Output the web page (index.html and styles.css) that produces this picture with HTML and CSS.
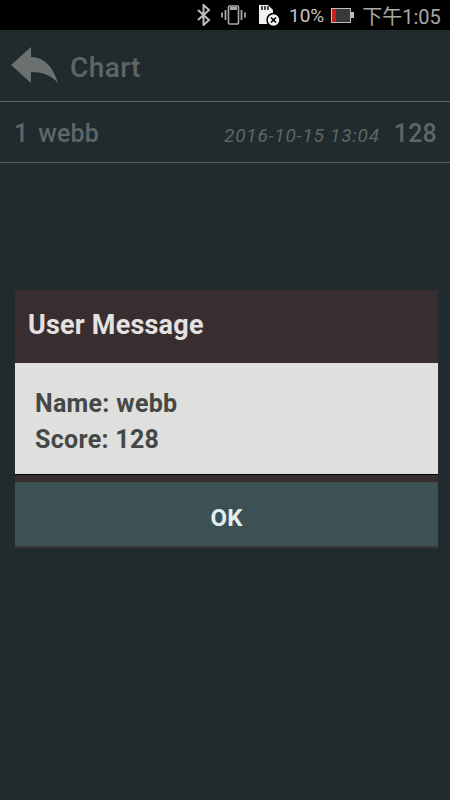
FILE: index.html
```html
<!DOCTYPE html>
<html lang="en">
<head>
    <meta charset="UTF-8">
    <meta name="viewport" content="width=device-width, initial-scale=1.0">
    <title>Chart</title>
    <link rel="stylesheet" href="styles.css">
</head>
<body>
    <div class="status-bar">
        <svg class="icon-bt" width="16" height="22" viewBox="0 0 16 22">
            <path d="M2 6 L13 16 L7.5 21 V1 L13 6 L2 16" fill="none" stroke="#bdbdbd" stroke-width="2"/>
        </svg>
        <svg class="icon-vibrate" width="25" height="20" viewBox="0 0 25 20">
            <rect x="7.5" y="1" width="10" height="18" rx="1" fill="none" stroke="#a8a8a8" stroke-width="1.6"/>
            <rect x="9" y="2" width="7" height="3" fill="#a8a8a8"/>
            <path d="M4.5 5 V15 M20.5 5 V15" stroke="#a8a8a8" stroke-width="1.8"/>
            <path d="M1 7.5 V12.5 M24 7.5 V12.5" stroke="#a8a8a8" stroke-width="1.8"/>
        </svg>
        <svg class="icon-sd" width="24" height="24" viewBox="0 0 24 24">
            <path d="M2 2 H11 L16 7 V21 H2 Z" fill="#f2f2f2"/>
            <path d="M5 3 V7 M8 3 V7 M11 3 V7" stroke="#000" stroke-width="1.4"/>
            <circle cx="16.5" cy="17" r="6.5" fill="#f2f2f2" stroke="#000" stroke-width="1.5"/>
            <path d="M14 14.5 L19 19.5 M19 14.5 L14 19.5" stroke="#000" stroke-width="1.6"/>
        </svg>
        <span class="battery-pct">10%</span>
        <div class="battery">
            <div class="battery-level"></div>
            <div class="battery-tip"></div>
        </div>
        <span class="clock">下午1:05</span>
    </div>

    <div class="header">
        <svg class="back-icon" width="48" height="38" viewBox="0 0 48 38">
            <path d="M0 18 L20 0 V10 C34 10 43 22 47 36 C40 28 31 25 20 25 V36 Z" fill="#6b7070"/>
        </svg>
        <span class="title">Chart</span>
    </div>

    <div class="row">
        <span class="rank">1</span>
        <span class="name">webb</span>
        <span class="date">2016-10-15 13:04</span>
        <span class="score">128</span>
    </div>

    <div class="dialog">
        <div class="dialog-title">User Message</div>
        <div class="dialog-body">
            <p>Name: webb</p>
            <p>Score: 128</p>
        </div>
        <div class="dialog-btn">OK</div>
    </div>
</body>
</html>
```

FILE: styles.css
```css
* {
    margin: 0;
    padding: 0;
    box-sizing: border-box;
    font-family: 'Roboto', 'Noto Sans CJK TC', sans-serif;
}

body {
    background-color: #212b2d;
    width: 450px;
    height: 800px;
    overflow: hidden;
    position: relative;
}

.status-bar {
    background-color: #000;
    height: 30px;
    display: flex;
    align-items: center;
    padding-left: 196px;
    color: #c4c4c4;
}

.icon-bt {
    margin-right: 9px;
}

.icon-vibrate {
    margin-right: 11px;
}

.icon-sd {
    margin-right: 8px;
}

.battery-pct {
    font-size: 19px;
    margin-right: 7px;
}

.battery {
    display: flex;
    align-items: center;
    margin-right: 8px;
}

.battery-level {
    width: 20px;
    height: 15px;
    background: linear-gradient(90deg, #c8201c 0 4px, #3a3a3a 4px);
    border: 1px solid #bdbdbd;
}

.battery-tip {
    width: 3px;
    height: 6px;
    background-color: #bdbdbd;
}

.clock {
    font-size: 20px;
    color: #a8a8a8;
}

.header {
    height: 72px;
    display: flex;
    align-items: center;
    padding-left: 11px;
    border-bottom: 1px solid #626868;
}

.back-icon {
    margin-right: 11px;
}

.title {
    font-size: 28px;
    font-weight: 500;
    letter-spacing: 0.4px;
    color: #5f6565;
    padding-top: 3px;
}

.row {
    height: 61px;
    display: flex;
    align-items: center;
    padding: 2px 13px 0 14px;
    border-bottom: 1px solid #565c5c;
    color: #5f6565;
}

.rank {
    font-size: 25px;
    font-weight: 500;
    margin-right: 10px;
}

.name {
    font-size: 25px;
    font-weight: 500;
    letter-spacing: 0.2px;
}

.date {
    font-size: 19px;
    font-style: italic;
    letter-spacing: 0.75px;
    margin-left: auto;
    margin-right: 14px;
    padding-top: 4px;
}

.score {
    font-size: 25px;
    font-weight: 500;
    letter-spacing: 0.2px;
}

.dialog {
    position: absolute;
    left: 15px;
    top: 290px;
    width: 423px;
    background-color: #382e2f;
}

.dialog-title {
    height: 73px;
    display: flex;
    align-items: center;
    padding: 0 0 3px 13px;
    font-size: 27px;
    font-weight: 700;
    letter-spacing: 0.2px;
    color: #e4e2e0;
}

.dialog-body {
    height: 112px;
    background-color: #dfdfdd;
    border-bottom: 1px solid #000;
    padding: 23px 20px 0;
    font-size: 25px;
    font-weight: 700;
    letter-spacing: 0.3px;
    line-height: 36px;
    color: #444846;
    margin-bottom: 7px;
}

.dialog-btn {
    height: 66px;
    background-color: #3d5053;
    border-bottom: 2px solid #383b3c;
    display: flex;
    align-items: center;
    justify-content: center;
    padding-top: 7px;
    font-size: 24px;
    font-weight: 700;
    color: #e3edee;
}
```
